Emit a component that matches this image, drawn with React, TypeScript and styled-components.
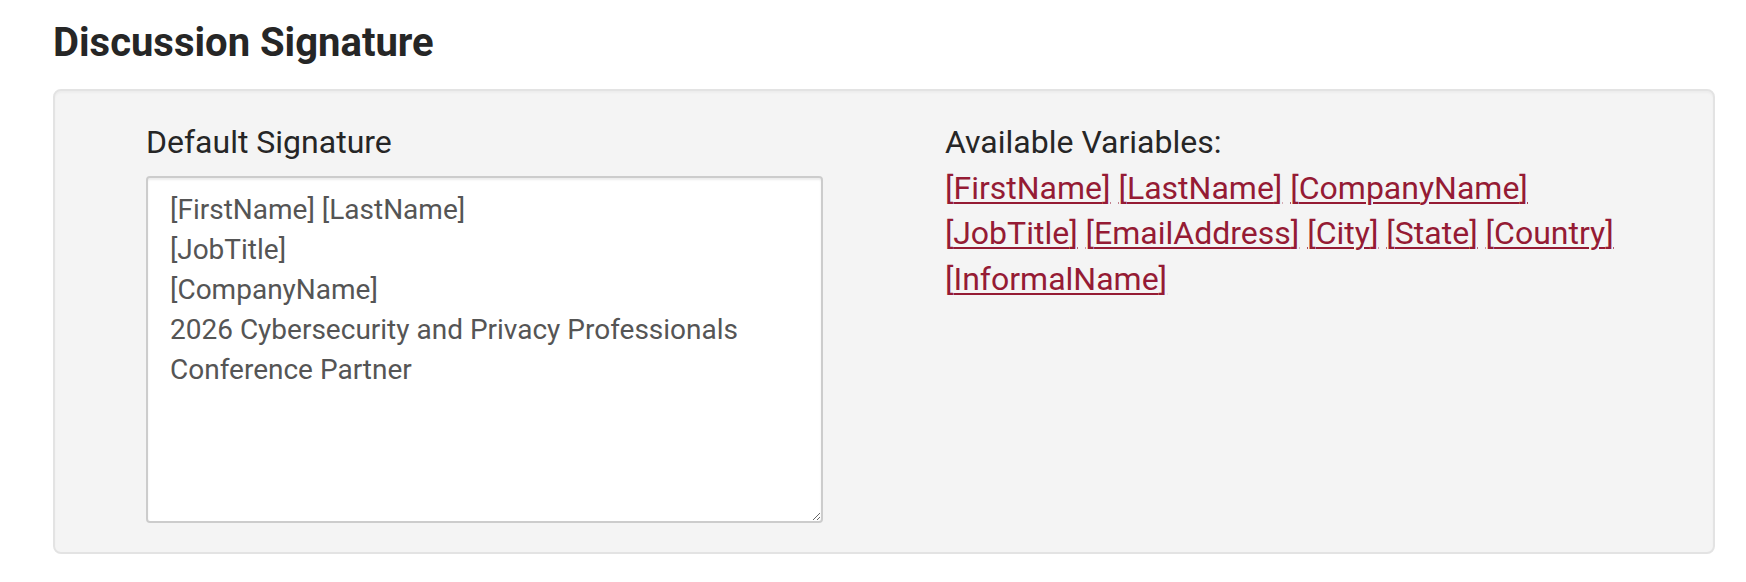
import React from "react";
import styled, { createGlobalStyle } from "styled-components";

const GlobalStyle = createGlobalStyle`
  html, body {
    margin: 0;
    padding: 0;
    background: #ffffff;
  }
  body {
    font-family: Roboto, "Helvetica Neue", Arial, sans-serif;
    color: #333333;
  }
`;

const variables = [
  "FirstName",
  "LastName",
  "CompanyName",
  "JobTitle",
  "EmailAddress",
  "City",
  "State",
  "Country",
  "InformalName",
];

const defaultSignature = [
  "[FirstName] [LastName]",
  "[JobTitle]",
  "[CompanyName]",
  "2026 Cybersecurity and Privacy Professionals Conference Partner",
].join("\n");

const App: React.FC = () => {
  return (
    <>
      <GlobalStyle />
      <Page>
        <Title>Discussion Signature</Title>
        <Well>
          <Column>
            <Label htmlFor="default-signature">Default Signature</Label>
            <SignatureBox
              id="default-signature"
              defaultValue={defaultSignature}
            />
          </Column>
          <Column>
            <Label as="div">Available Variables:</Label>
            <VarList>
              {variables.map((v, i) => (
                <React.Fragment key={v}>
                  <VarLink href="#">[{v}]</VarLink>
                  {i < variables.length - 1 ? " " : ""}
                </React.Fragment>
              ))}
            </VarList>
          </Column>
        </Well>
      </Page>
    </>
  );
};

export default App;

const Page = styled.div`
  padding: 21px 31px 0 53px;
`;

const Title = styled.h2`
  margin: 0 0 24px 0;
  font-size: 40px;
  line-height: 44px;
  font-weight: 700;
  color: #262626;
`;

const Well = styled.div`
  display: flex;
  gap: 122px;
  padding: 29px 0 29px 91px;
  background: #f4f4f4;
  border: 2px solid #e3e3e3;
  border-radius: 8px;
  box-shadow: inset 0 2px 2px rgba(0, 0, 0, 0.03);
`;

const Column = styled.div`
  display: flex;
  flex-direction: column;
  width: 677px;
`;

const Label = styled.label`
  display: block;
  margin-bottom: 10px;
  font-size: 32px;
  line-height: 45.7px;
  font-weight: 400;
  color: #262626;
`;

const SignatureBox = styled.textarea`
  box-sizing: border-box;
  width: 677px;
  height: 347px;
  padding: 12px 22px;
  font-family: Roboto, "Helvetica Neue", Arial, sans-serif;
  font-size: 28px;
  line-height: 40px;
  color: #555555;
  background: #ffffff;
  border: 2px solid #cccccc;
  border-radius: 4px;
  box-shadow: inset 0 2px 2px rgba(0, 0, 0, 0.075);
  outline: none;
`;

const VarList = styled.div`
  margin-top: -10px;
  font-size: 32px;
  line-height: 45.7px;
  color: #262626;
`;

const VarLink = styled.a`
  color: #951b34;
  text-decoration: underline;
  text-underline-offset: 3px;
  text-decoration-thickness: 2px;
`;
